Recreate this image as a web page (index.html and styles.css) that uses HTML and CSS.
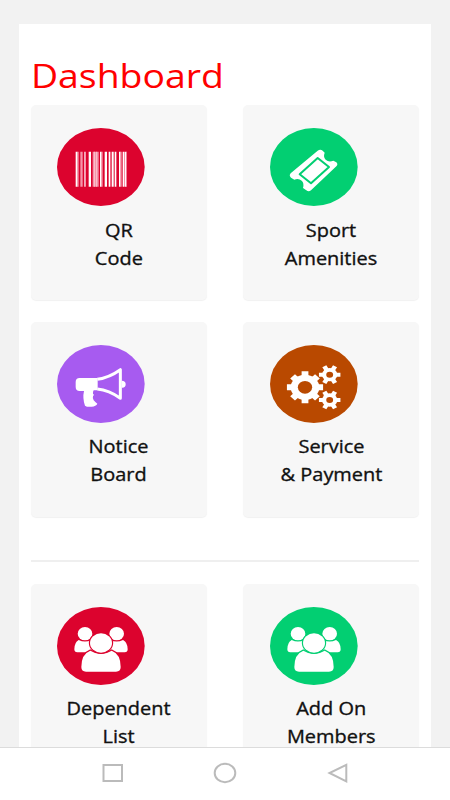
FILE: index.html
```html
<!DOCTYPE html>
<html lang="en">
<head>
<meta charset="utf-8">
<title>Dashboard</title>
<link rel="stylesheet" href="styles.css">
</head>
<body>
<svg class="defs" width="0" height="0">
  <defs>
    <g id="people" fill="#fff">
      <ellipse cx="106" cy="101" rx="22" ry="20"/>
      <ellipse cx="201" cy="101" rx="22" ry="20"/>
      <path d="M87 120q19 9 38 0l12 37H83q-9 0-9-9 0-21 13-28z"/>
      <path d="M220 120q-19 9-38 0l-12 37h55q9 0 9-9 0-21-14-28z"/>
      <path class="cut" d="M122 152q32 20 64 0 27 10 27 49 0 14-14 14h-90q-14 0-14-14 0-39 27-49z"/>
      <ellipse class="cut" cx="154" cy="129" rx="33" ry="29"/>
    </g>
    <g id="small-gear">
      <path stroke="#fff" stroke-width="12" d="M-28 0H28M-14-25 14 25M14-25-14 25"/>
      <circle r="20" fill="#fff"/><circle r="9" fill="#b94900"/>
    </g>
  </defs>
</svg>
<main class="screen">
  <section class="panel">
    <h1>Dashboard</h1>
    <div class="grid">
      <article class="card">
        <svg class="icon red" viewBox="22 25 263 234" preserveAspectRatio="none">
          <ellipse cx="153.5" cy="142" rx="131.5" ry="117"/>
          <path fill="#fff" d="M78 96h6v105h-6zM104 96h2v105h-2zM117 96h7v105h-7zM151 96h5v105h-5zM165 96h7v105h-7zM177 96h4v105h-4zM186 96h6v105h-6zM195 96h5v105h-5zM208 96h5v105h-5zM219 96h4v105h-4zM226 96h4v105h-4z"/>
          <path fill="#f693a8" d="M84 96h3v105h-3zM92 96h7v105h-7zM106 96h3v105h-3zM129 96h18v105h-18zM156 96h3v105h-3zM181 96h2v105h-2zM213 96h3v105h-3zM223 96h3v105h-3zM230 96h2v105h-2z"/>
          <path fill="#fbd5dc" d="M133 96h2v105h-2zM140 96h2v105h-2z"/>
        </svg>
        <p><span>QR<br>Code</span></p>
      </article>
      <article class="card">
        <svg class="icon green" viewBox="24 25 263 234" preserveAspectRatio="none">
          <ellipse cx="155.5" cy="142" rx="131.5" ry="117"/>
          <path fill="#fff" d="M86 161 167 93q8-6 15 0l6 6q-5 13 3 21 9 9 23 3l9 5q6 6 0 12l-76 72q-7 6-14 0l-10-7q4-15-4-22-9-8-22-3l-10-6q-7-6-1-13z"/>
          <path fill="none" stroke="#02cf72" stroke-width="6" stroke-linejoin="round" d="m113 164 54-49 34 27-54 49z"/>
        </svg>
        <p><span>Sport<br>Amenities</span></p>
      </article>
      <article class="card">
        <svg class="icon purple" viewBox="22 24 263 234" preserveAspectRatio="none">
          <ellipse cx="153.5" cy="141" rx="131.5" ry="117"/>
          <path fill="#fff" d="M90 123h54v37h-12q-3 5-2 11l3 2-3 5q-2 5 2 12l5 5 6 5q-4 8-17 9-13 2-20-3-8-22-3-44H90q-12 0-12-12v-15q0-12 12-12zM216 131q12 0 12 11t-12 10z"/>
          <path fill="none" stroke="#fff" stroke-width="9" stroke-linejoin="round" d="M143 127q37-6 69-29v86q-34-25-69-28"/>
        </svg>
        <p><span>Notice<br>Board</span></p>
      </article>
      <article class="card">
        <svg class="icon brown" viewBox="24 24 263 234" preserveAspectRatio="none">
          <ellipse cx="155.5" cy="141" rx="131.5" ry="117"/>
          <g transform="translate(129 151) scale(1.13 1)">
            <path stroke="#fff" stroke-width="18" d="M-48 0H48M0-48V48M-33-33 33 33M33-33-33 33"/>
            <circle r="38" fill="#fff"/><circle r="19" fill="#b94900"/>
          </g>
          <use href="#small-gear" transform="translate(203 113) scale(1.15 1)"/>
          <use href="#small-gear" transform="translate(203 189) scale(1.15 1)"/>
        </svg>
        <p><span>Service<br>&amp; Payment</span></p>
      </article>
    </div>
    <hr>
    <div class="grid">
      <article class="card">
        <svg class="icon red" viewBox="22 21 263 234" preserveAspectRatio="none">
          <ellipse cx="153.5" cy="138" rx="131.5" ry="117"/><use href="#people"/>
        </svg>
        <p><span>Dependent<br>List</span></p>
      </article>
      <article class="card">
        <svg class="icon green" viewBox="22 21 263 234" preserveAspectRatio="none">
          <ellipse cx="153.5" cy="138" rx="131.5" ry="117"/><use href="#people"/>
        </svg>
        <p><span>Add On<br>Members</span></p>
      </article>
    </div>
  </section>
</main>
<nav class="navbar">
  <svg viewBox="0 0 24 22"><rect x="2.5" y="3" width="18.5" height="16"/></svg>
  <svg viewBox="0 0 24 22"><ellipse cx="12" cy="11" rx="10.3" ry="9.2"/></svg>
  <svg viewBox="0 0 24 22"><path d="M20.3 2.8v16.5L3.5 11z"/></svg>
</nav>
</body>
</html>
```

FILE: styles.css
```css
* { box-sizing: border-box; }

body {
  margin: 0;
  height: 800px;
  display: flex;
  flex-direction: column;
  overflow: hidden;
  background: #f2f2f2;
  font-family: "Open Sans", "Noto Sans", sans-serif;
}

.defs { display: block; flex: none; position: absolute; }

.screen {
  flex: 1;
  min-height: 0;
  overflow: hidden;
  padding: 24px 18.7px 0 19px;
}

.panel {
  height: 760px;
  padding: 30px 12.4px 0 12px;
  background: #fff;
}

h1 {
  width: max-content;
  margin: 0;
  height: 51.4px;
  line-height: 43px;
  font-size: 33.5px;
  font-weight: 400;
  color: #f00;
  transform: scaleX(1.115);
  transform-origin: 0 0;
}

.grid {
  display: grid;
  grid-template-columns: 175.8px 175.8px;
  justify-content: space-between;
  row-gap: 21.6px;
}

.card {
  height: 195px;
  padding-top: 23px;
  border-radius: 5px;
  background: #f7f7f7;
  box-shadow: 0 1px 1px #f1f1f1;
}

.icon {
  display: block;
  overflow: visible;
  width: 87.7px;
  height: 78px;
  margin-left: 26.4px;
}

.red { fill: #dc032e; --disc: #dc032e; }
.green { fill: #02cf72; --disc: #02cf72; }
.purple { fill: #a75bf0; }
.brown { fill: #b94900; }

.cut { stroke: var(--disc); stroke-width: 7; paint-order: stroke; }

.card p {
  margin: 10.5px 0 0;
  text-align: center;
  font-size: 19px;
  font-weight: 500;
  line-height: 27.8px;
  color: #111;
  -webkit-text-stroke: 0.35px #111;
}

.card span {
  display: inline-block;
  transform: scaleX(1.05);
}

hr {
  height: 2px;
  margin: 43px 0 22px;
  border: 0;
  background: #efefef;
}

.navbar {
  flex: none;
  height: 53px;
  display: flex;
  justify-content: center;
  gap: 88.5px;
  padding-top: 14px;
  border-top: 1px solid #dcdcdc;
  background: #fff;
}

.navbar svg {
  width: 24px;
  height: 22px;
  fill: none;
  stroke: #bbb;
  stroke-width: 2;
}
```
